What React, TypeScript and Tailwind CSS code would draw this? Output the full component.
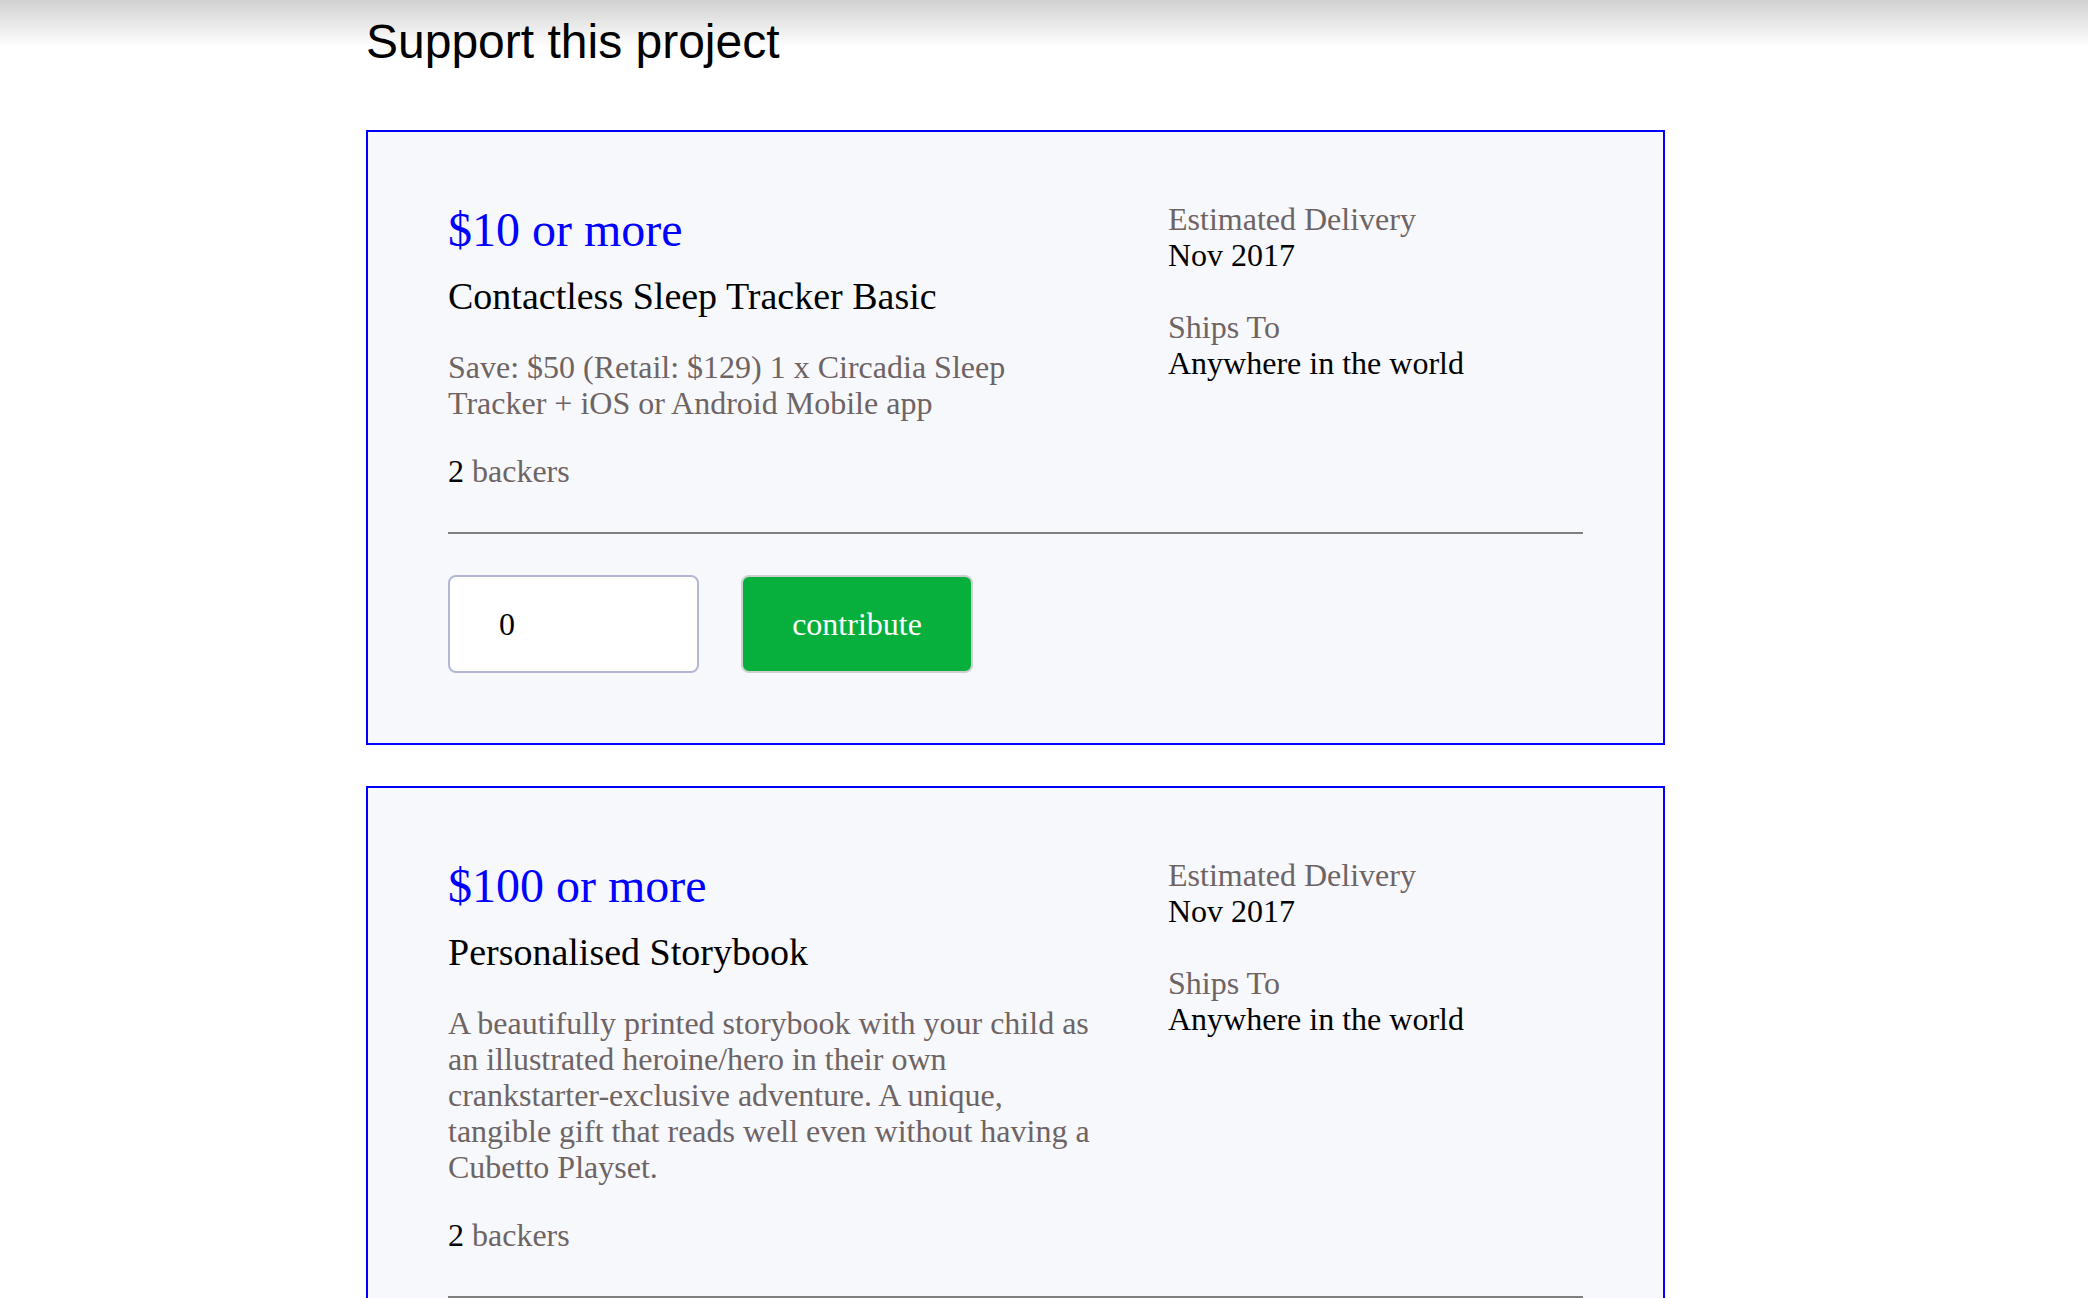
type Reward = {
  price: string;
  title: string;
  description: string;
  backers: number;
  delivery: string;
  shipsTo: string;
};

const rewards: Reward[] = [
  {
    price: '$10 or more',
    title: 'Contactless Sleep Tracker Basic',
    description: 'Save: $50 (Retail: $129) 1 x Circadia Sleep Tracker + iOS or Android Mobile app',
    backers: 2,
    delivery: 'Nov 2017',
    shipsTo: 'Anywhere in the world',
  },
  {
    price: '$100 or more',
    title: 'Personalised Storybook',
    description:
      'A beautifully printed storybook with your child as an illustrated heroine/hero in their own crankstarter-exclusive adventure. A unique, tangible gift that reads well even without having a Cubetto Playset.',
    backers: 2,
    delivery: 'Nov 2017',
    shipsTo: 'Anywhere in the world',
  },
];

function RewardCard({ reward }: { reward: Reward }) {
  return (
    <div className="w-[1299px] border-2 border-[#0000ff] bg-[#f7f8fc] px-[80px] pt-[69px] pb-[70px]">
      <div className="grid grid-cols-[656px_1fr] gap-x-[64px] items-start">
        {/* Left: reward details */}
        <div className="pt-[2px]">
          <h2 className="text-[48px] leading-[53px] text-[#0000ff]">{reward.price}</h2>
          <h3 className="mt-[19px] text-[38px] leading-[42px] text-black">{reward.title}</h3>
          <p className="mt-[32px] text-[32px] leading-[36px] text-[#6e6464]">{reward.description}</p>
          <p className="mt-[32px] text-[32px] leading-[36px] text-[#6e6464]">
            <span className="text-black">{reward.backers}</span> backers
          </p>
        </div>

        {/* Right: delivery info */}
        <div className="text-[32px] leading-[36px]">
          <div className="text-[#6e6464]">Estimated Delivery</div>
          <div className="text-black">{reward.delivery}</div>
          <div className="mt-[36px] text-[#6e6464]">Ships To</div>
          <div className="text-black">{reward.shipsTo}</div>
        </div>
      </div>

      <div className="mt-[43px] h-[2px] bg-[#808080]" />

      <div className="mt-[41px] flex items-center gap-[42px]">
        <input
          type="text"
          defaultValue="0"
          className="h-[98px] w-[251px] rounded-[8px] border-2 border-[#b3b6d6] bg-white pl-[49px] text-[32px] text-black outline-none"
        />
        <button className="h-[98px] w-[232px] rounded-[8px] border-2 border-[#cfcfcf] bg-[#07b03c] text-[32px] text-white">
          contribute
        </button>
      </div>
    </div>
  );
}

export default function App() {
  return (
    <div className="min-h-screen bg-[linear-gradient(#d1d1d1,#ffffff_47px)] font-['Liberation_Serif',serif]">
      <div className="ml-[366px] w-[1299px] pt-[14px]">
        <h1 className="font-['Liberation_Sans',Arial,sans-serif] text-[48px] leading-[56px] text-black">
          Support this project
        </h1>

        <div className="mt-[60px] flex flex-col gap-[41px] pb-[80px]">
          {rewards.map((r) => (
            <RewardCard key={r.title} reward={r} />
          ))}
        </div>
      </div>
    </div>
  );
}
